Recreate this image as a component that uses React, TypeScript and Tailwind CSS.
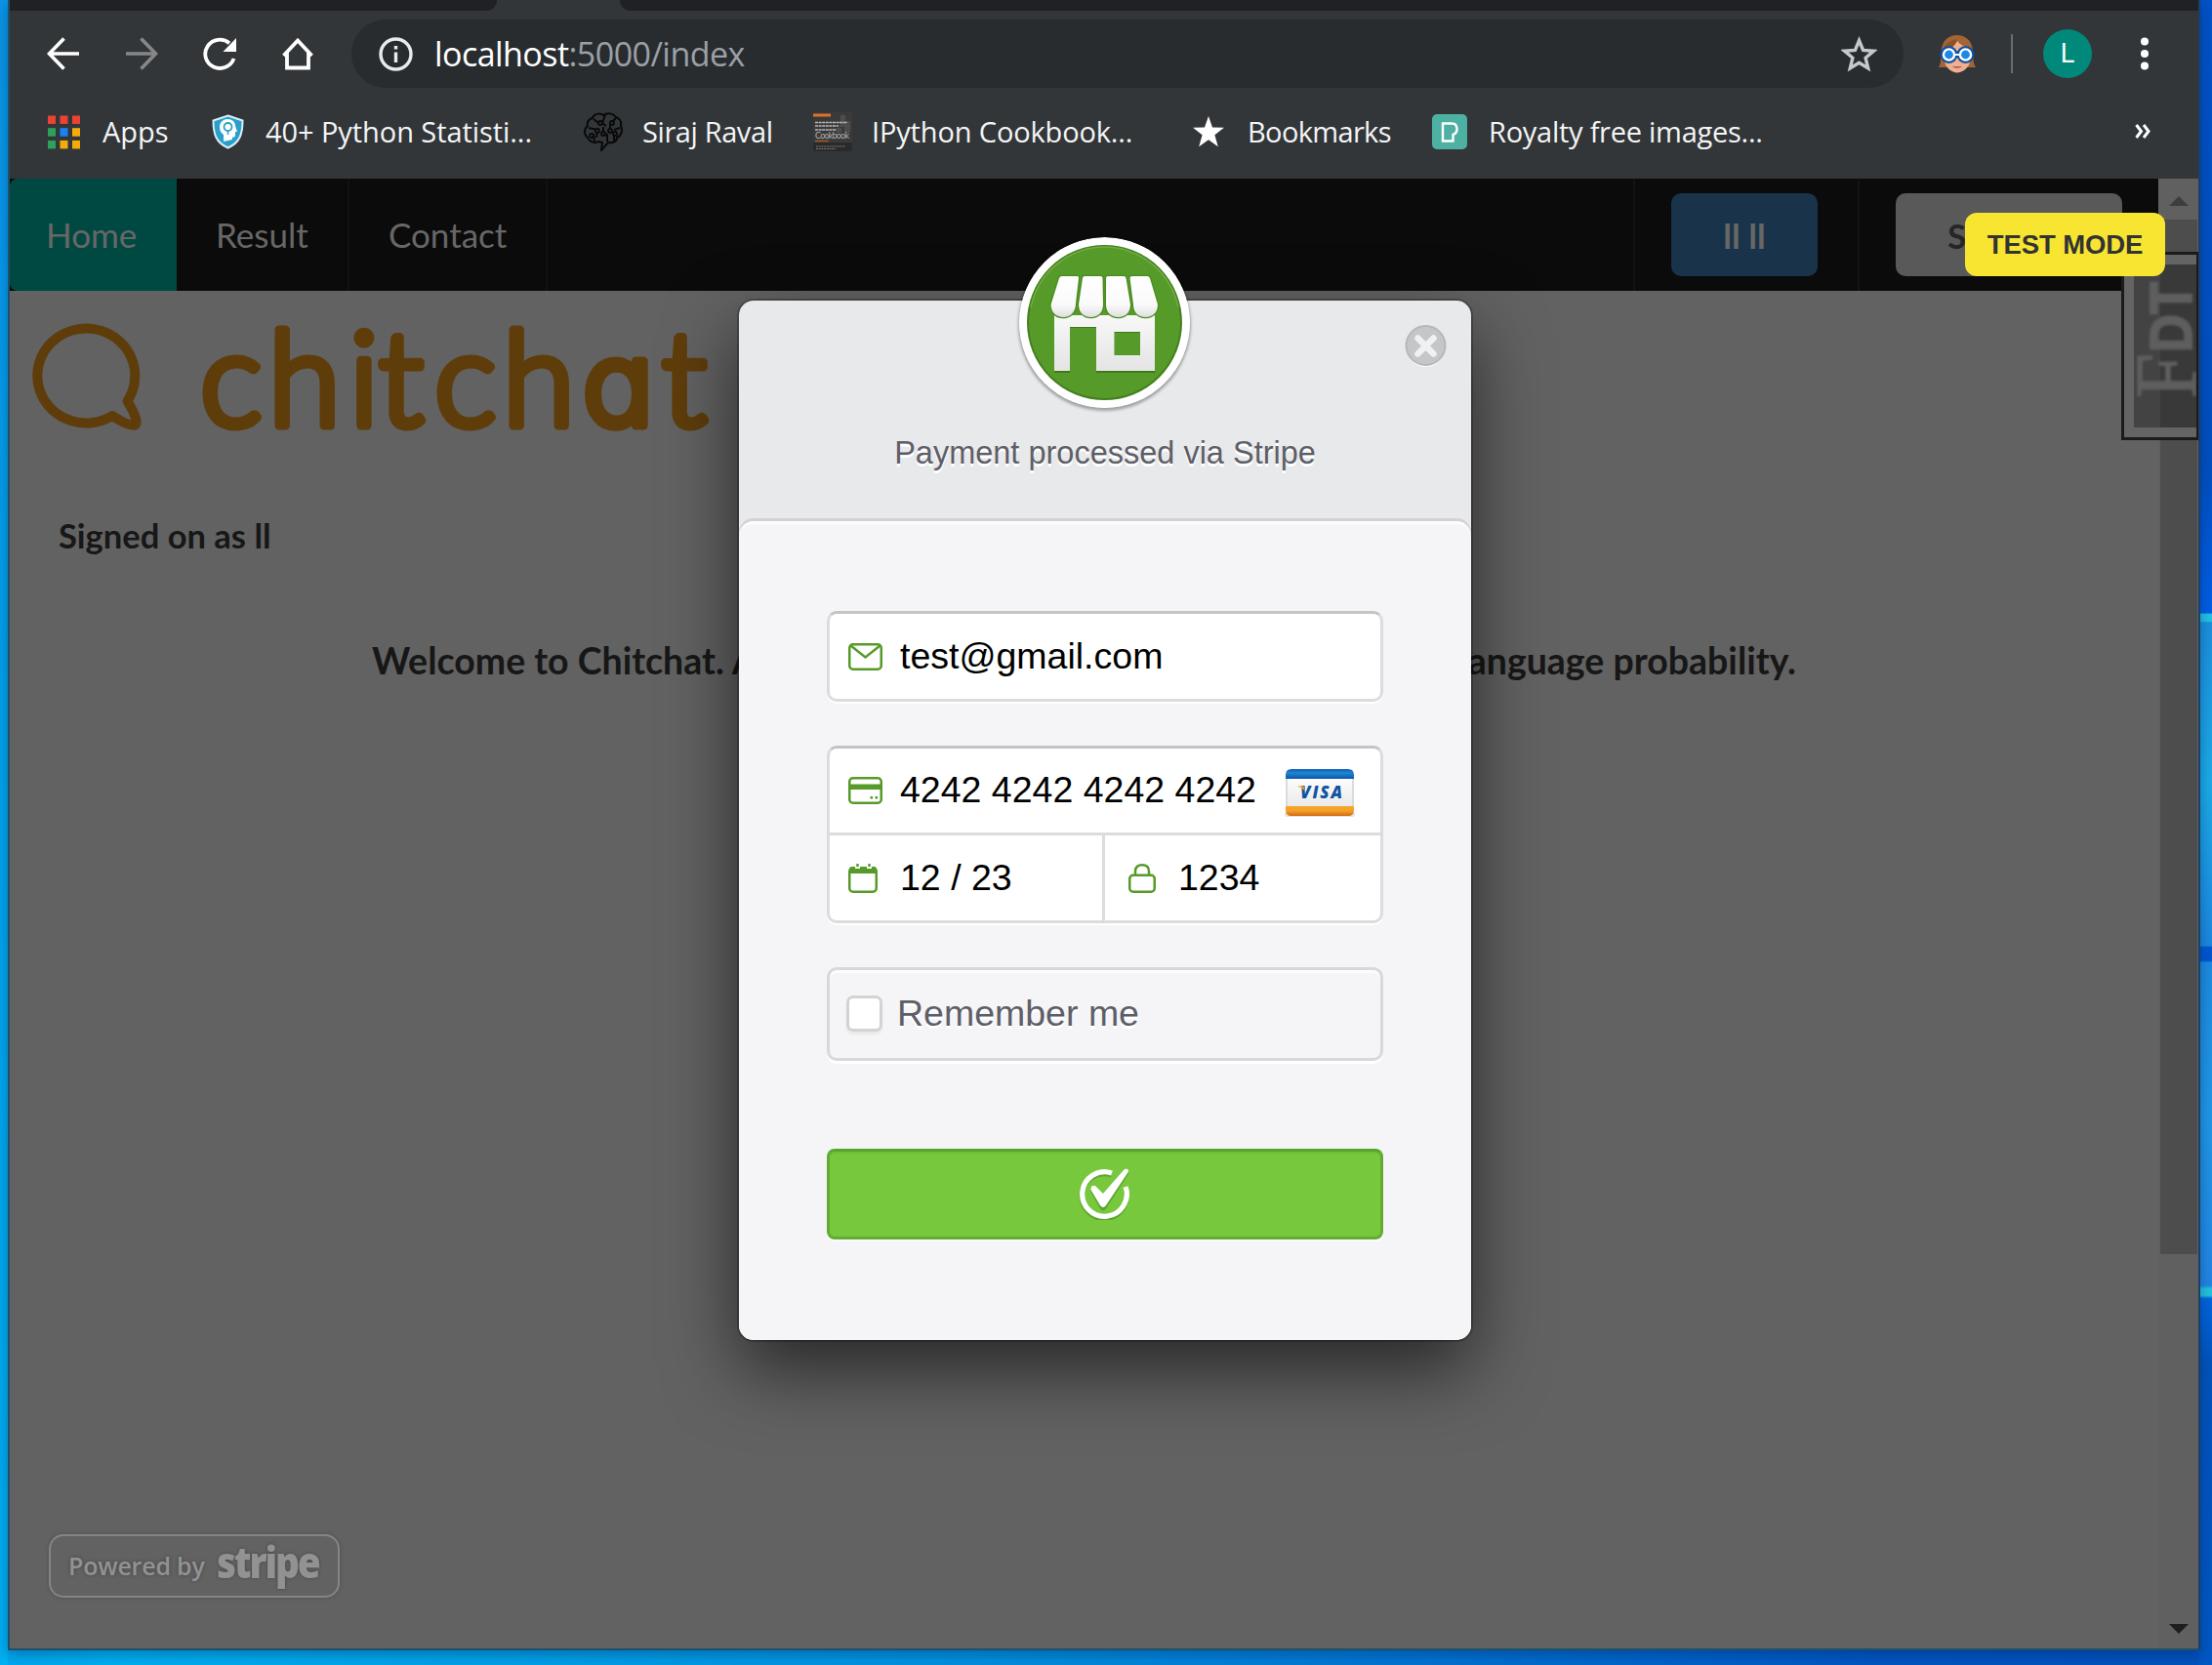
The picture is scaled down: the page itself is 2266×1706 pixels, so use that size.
import React from "react";

const GREEN = "#569b29";

function TopBar() {
  return (
    <div className="flex h-[11px] justify-between bg-[#323639]">
      <div className="h-full w-[499px] rounded-br-[14px] bg-[#202124]" />
      <div className="h-full w-[1617px] rounded-bl-[14px] bg-[#202124]" />
    </div>
  );
}

function NavIcons() {
  return (
    <div className="flex w-[350px] items-center gap-[46px] pl-[38px]">
      <svg className="size-[34px]" viewBox="0 0 34 34" fill="none" stroke="#fff" strokeWidth="3.6">
        <path d="M33 17H4M17.5 1.5L2.5 17l15 15.5" />
      </svg>
      <svg className="size-[34px]" viewBox="0 0 34 34" fill="none" stroke="#868789" strokeWidth="3.6">
        <path d="M1 17h29M16.500 1.500l15 15.500-15 15.500" />
      </svg>
      <svg className="size-[34px]" viewBox="0 0 34 34">
        <path d="M31.500 22A15 14.600 0 1 1 27 6.200" fill="none" stroke="#fff" strokeWidth="3.800" />
        <path d="M34 1v14H20.500z" fill="#fff" />
      </svg>
      <svg className="size-[34px]" viewBox="0 0 34 34" fill="none" stroke="#fff" strokeWidth="3.800">
        <path d="M2.500 19L17 3.500 31.500 19M6 16v15.500h22V16" />
      </svg>
    </div>
  );
}

function Toolbar() {
  return (
    <div className="flex h-[88px] items-center bg-[#323639] font-['Open_Sans',sans-serif]">
      <NavIcons />
      <div className="flex h-[70px] w-[1590px] items-center rounded-full bg-[#282c2f] pr-[27px] pl-[28px]">
        <svg className="size-[35px]" viewBox="0 0 35 35">
          <circle cx="17.500" cy="17.500" r="15.500" fill="none" stroke="#e8eaed" strokeWidth="3.400" />
          <path d="M15.800 9h3.400v3.600h-3.400zM15.800 15.500h3.400v10.500h-3.400z" fill="#e8eaed" />
        </svg>
        <div className="ml-[22px] flex-1 text-[34px] leading-[50px] tracking-[-0.55px] whitespace-nowrap text-[#9aa0a6]">
          <span className="text-white">localhost</span>:5000/index
        </div>
        <svg className="size-[37px]" viewBox="0 0 37 37">
          <path
            d="M18.500 4.500l4.100 10 10.700.8-8.200 7 2.600 10.600-9.200-5.700-9.200 5.700 2.600-10.600-8.200-7 10.700-.8z"
            fill="none"
            stroke="#c6c9cb"
            strokeWidth="3.400"
          />
        </svg>
      </div>
      <svg className="ml-[35px] h-[40px] w-[40px]" viewBox="0 0 40 40">
        <path d="M1 34C5 28 2 18 5 11 8 3 15 1 20 1c7 0 13 4 15 11 2 8 0 16 4 22z" fill="#a56433" />
        <path d="M7 14c6 0 11-3 13-7 3 4 8 6 13 7v13c0 7-8 12.500-13 12.500S7 34 7 27z" fill="#f0b08c" />
        <path d="M5 17C7 9 14 6 20 5c-1 6-7 12-15 12z" fill="#8d5228" />
        <path d="M15 33h10c-2 2.400-8 2.400-10 0z" fill="#b2556b" />
        <circle cx="11.500" cy="21" r="9" fill="#0b50a6" />
        <circle cx="28.500" cy="21" r="9" fill="#0b50a6" />
        <circle cx="11.500" cy="21" r="5.600" fill="#1e88e5" stroke="#fff" strokeWidth="2.400" />
        <circle cx="28.500" cy="21" r="5.600" fill="#1e88e5" stroke="#fff" strokeWidth="2.400" />
        <path d="M17 21h6" stroke="#fff" strokeWidth="2" />
      </svg>
      <div className="ml-[35px] h-[40px] w-[2px] bg-[#6a6d70]" />
      <div className="ml-[31px] flex size-[50px] items-center justify-center rounded-full bg-[#00897b] font-['Roboto',sans-serif] text-[27px] text-white">
        L
      </div>
      <svg className="ml-[49px] h-[34px] w-[10px]" viewBox="0 0 10 34" fill="#fff">
        <circle cx="5" cy="4.500" r="4" />
        <circle cx="5" cy="17" r="4" />
        <circle cx="5" cy="29.500" r="4" />
      </svg>
    </div>
  );
}

function BookmarksBar() {
  const apps = ["#ea4335", "#ea4335", "#ea4335", "#2da15a", "#1a82f5", "#f5ac0a", "#2da15a", "#f5ac0a", "#f5ac0a"];
  return (
    <div className="flex h-[84px] items-start bg-[#323639] pt-[16px] pl-[39px] font-['Open_Sans',sans-serif] text-[29px] leading-[40px] whitespace-nowrap text-[#f4f5f6]">
      <div className="flex w-[168px] items-center">
        <svg className="mr-[23px] h-[35px] w-[33px]" viewBox="0 0 33 35">
          {apps.map((c, i) => (
            <rect key={i} x={(i % 3) * 12.5} y={Math.floor(i / 3) * 12.7 + 0.5} width="8" height="8.500" fill={c} />
          ))}
        </svg>
        <span>Apps</span>
      </div>
      <div className="flex w-[381px] items-center">
        <svg className="mr-[22px] h-[36px] w-[33px]" viewBox="0 0 33 36">
          <path d="M16.500 1.500L31.500 6.500C31.500 20 29 29 16.500 34.500 4 29 1.500 20 1.500 6.500z" fill="#28a0cb" stroke="#d9eef6" strokeWidth="2" />
          <path
            d="M12 28v-7c-3-2-4-5-4-8 0-5 4-8 8-8 5 0 8 3 8 7l2 6h-2v4c0 1-1 2-3 1.500V26z"
            fill="#fff"
          />
          <circle cx="16.500" cy="13" r="4" fill="none" stroke="#28a0cb" strokeWidth="1.800" />
          <path d="M16.500 17v4" stroke="#28a0cb" strokeWidth="1.500" />
        </svg>
        <span className="tracking-[-0.07px]">40+ Python Statisti...</span>
      </div>
      <div className="flex w-[235px] items-center">
        <svg className="mr-[20px] size-[40px]" viewBox="0 0 40 40" fill="none" stroke="#08090a" strokeWidth="2">
          <path d="M20 3c-4-3-10-1-11 3-4 1-6 4-5 8-4 3-4 9 0 12 2 5 8 6 11 4l4 1-1 8 7-8c5 1 9-1 9-5 5-2 6-8 4-12 1-5-2-8-5-9-3-4-9-5-13-2z" />
          <path d="M10 7l5 4M22 3l-3 8 4 3M33 6l-4 4M5 16l9 2-1 8M37 16l-6 2M20 15v6l4 2v7M11 30l-1-8M31 30v-7M27 12v6" />
          <g fill="#323639" strokeWidth="1.800">
            <circle cx="17" cy="11" r="2" />
            <circle cx="29" cy="11" r="2" />
            <circle cx="14" cy="19" r="2" />
            <circle cx="20" cy="22" r="2" />
            <circle cx="27" cy="19" r="2" />
            <circle cx="32" cy="22" r="2" />
            <circle cx="8" cy="24" r="2" />
          </g>
        </svg>
        <span className="tracking-[-0.4px]">Siraj Raval</span>
      </div>
      <div className="flex w-[389px] items-center">
        <svg className="mr-[20px] size-[40px]" viewBox="0 0 40 40">
          <rect width="40" height="40" fill="#3a3a3a" />
          <path d="M28 3h5v6h5v12h-6v-6h-5zM24 16h5v5h-5z" fill="#4d4d4d" />
          <path d="M0 31h40v9H0z" fill="#2a2a2a" />
          <rect y="1.500" width="18" height="3" fill="#e0712a" />
          <path d="M2 10.500h33M2 14h24M2 18h22" stroke="#b9b9b9" strokeWidth="1.600" strokeDasharray="3 .6" />
          <text x="2" y="27" fontSize="9" fill="#b0b0b0" fontFamily="Lato, sans-serif" textLength="35">
            Cookbook
          </text>
          <path d="M2 29.500h14" stroke="#a8561f" strokeWidth="1.500" />
          <path d="M3 35h30M3 37.500h20" stroke="#777" strokeWidth="1.200" strokeDasharray="2 .7" />
        </svg>
        <span className="tracking-[-0.15px]">IPython Cookbook...</span>
      </div>
      <div className="flex w-[245px] items-center">
        <svg className="mr-[24px] size-[32px]" viewBox="0 0 32 32">
          <path d="M16 0l4 11.500 12 .3-9.600 7.400 3.400 12L16 24.200l-9.800 7 3.400-12L0 11.800l12-.3z" fill="#fff" />
        </svg>
        <span className="tracking-[-0.65px]">Bookmarks</span>
      </div>
      <div className="flex w-[720px] items-center">
        <svg className="mr-[22px] size-[36px]" viewBox="0 0 36 36">
          <rect width="36" height="36" rx="5" fill="#4eb0a2" />
          <path
            d="M11 9.500h9.500c6 0 7 9.500 1 11.500v6.500H11z"
            fill="none"
            stroke="#fff"
            strokeWidth="2.400"
          />
          <path d="M16.500 13.500v8" stroke="#4eb0a2" strokeWidth="1" />
        </svg>
        <span className="tracking-[-0.26px]">Royalty free images...</span>
      </div>
      <svg className="mt-[12px] h-[15px] w-[17px]" viewBox="0 0 17 15" fill="none" stroke="#fff" strokeWidth="3">
        <path d="M1.500 1l5 6.500-5 6.500M9 1l5 6.500L9 14" />
      </svg>
    </div>
  );
}

function SiteNav() {
  return (
    <div className="flex h-[115px] w-[2201px] items-stretch bg-[#0b0b0b] font-['Lato',sans-serif] text-[35px] leading-[115px] text-[#676767]">
      <div className="w-[171px] rounded-l-[8px] bg-[#004943] pl-[37px]">Home</div>
      <div className="w-[177px] border-r-2 border-[#111] pl-[40px]">Result</div>
      <div className="w-[203px] border-r-2 border-[#111] pl-[40px]">Contact</div>
      <div className="w-[1114px] border-r-2 border-[#131313]" />
      <div className="flex w-[230px] items-center border-r-2 border-[#131313] pl-[37px]">
        <div className="h-[85px] w-[150px] rounded-[10px] bg-[#19334b] text-center font-bold leading-[87px]">ll ll</div>
      </div>
      <div className="flex items-center pl-[37px]">
        <div className="h-[85px] w-[232px] rounded-[10px] bg-[#595959] pl-[53px] font-bold leading-[87px] text-[#262626]">
          Sign Out
        </div>
      </div>
    </div>
  );
}

function ChitchatLogo() {
  return (
    <svg className="block h-[140px] w-[747px]" viewBox="10 298 747 140" overflow="visible" fill="#5f3d0b" stroke="#5f3d0b">
      <path
        d="M130.500 411A50 48.500 0 1 0 115 426Q134 438 138.500 435.500Q143 432 130.500 411z"
        fill="none"
        strokeWidth="10"
        strokeLinejoin="round"
      />
      <text
        x="205 275 358 388 445 515 597 678"
        y="436"
        fontSize="134"
        fontWeight="300"
        fontFamily="Lato, sans-serif"
        strokeWidth="9"
        strokeLinejoin="round"
      >
        chitch
        <tspan fontFamily="Inter, sans-serif" fontSize="120" className="[font-feature-settings:'cv11']">
          a
        </tspan>
        t
      </text>
    </svg>
  );
}

function StripeBadge() {
  return (
    <div className="flex h-[65px] w-[298px] items-center rounded-[15px] border-2 border-[#858585] pl-[18px] text-[#929292] shadow-[0_0_4px_rgba(0,0,0,0.2)] [text-shadow:0_0_4px_rgba(0,0,0,0.3)]">
      <span className="w-[152px] font-['Open_Sans',sans-serif] text-[25px] font-semibold tracking-[-0.200px] whitespace-nowrap">
        Powered by
      </span>
      <span className="-mt-[9px] origin-left scale-x-[0.86] font-['Open_Sans',sans-serif] text-[45px] leading-[50px] font-extrabold tracking-[-2.500px]">
        stripe
      </span>
    </div>
  );
}

function Scrollbar() {
  return (
    <div className="relative flex w-[41px] flex-col items-end bg-[#606060]">
      <div className="flex h-[42px] w-full items-center justify-center pt-1">
        <svg className="h-[10px] w-[20px]" viewBox="0 0 20 10">
          <path d="M10 0L20 10H0z" fill="#3e3e3e" />
        </svg>
      </div>
      <div className="mr-[1px] h-[1060px] w-[38px] bg-[#4d4d4d]" />
      <div className="flex w-full flex-1 items-end justify-center pb-[15px]">
        <svg className="h-[10px] w-[20px]" viewBox="0 0 20 10">
          <path d="M0 0h20L10 10z" fill="#1e1e1e" />
        </svg>
      </div>
    </div>
  );
}

function ToolbarHandle() {
  return (
    <div className="absolute top-[75px] right-0 h-[193px] w-[79px] border-3 border-r-2 border-[#1b1b1b] bg-[#646464] pt-[10px] pl-[10px]">
      <svg className="block h-[167px] w-[64px]" viewBox="0 0 64 167">
        <rect width="64" height="167" fill="#434343" />
        <rect x="27" width="37" height="167" fill="#393939" />
        <g fill="#5e5e5e" stroke="#5e5e5e" className="blur-[1px]">
          <text transform="translate(64 137) rotate(-90)" fontFamily="Liberation Serif, serif" fontSize="90" textLength="46" lengthAdjust="spacingAndGlyphs" strokeWidth="1.500">
            F
          </text>
          <text transform="translate(59 90) rotate(-90)" fontFamily="Liberation Sans, sans-serif" fontWeight="700" fontSize="61" textLength="72" lengthAdjust="spacingAndGlyphs" strokeWidth="2">
            DT
          </text>
        </g>
      </svg>
    </div>
  );
}

function StoreLogo() {
  return (
    <svg className="absolute -top-[65px] left-[287px] size-[175px] rounded-full shadow-[0_2px_3px_1px_rgba(0,0,0,0.3)]" viewBox="0 0 175 175">
      <defs>
        <linearGradient id="awning" x1="0" y1="0" x2="0" y2="1">
          <stop offset="0" stopColor="#fff" />
          <stop offset="0.7" stopColor="#fafafa" />
          <stop offset="1" stopColor="#dedede" />
        </linearGradient>
        <linearGradient id="wall" x1="0" y1="0" x2="0" y2="1">
          <stop offset="0" stopColor="#f8f8f8" />
          <stop offset="1" stopColor="#e4e4e4" />
        </linearGradient>
      </defs>
      <circle cx="87.500" cy="87.500" r="87.500" fill="#fff" />
      <circle cx="87.500" cy="87.500" r="78.500" fill={GREEN} stroke="#457f20" strokeWidth="2" />
      <path d="M12 72A77 77 0 0 1 163 72" fill="none" stroke="#6fae45" strokeWidth="1.500" />
      <path d="M36 85h103v53H79V92H52v46H36zM97.500 97v24H124V97z" transform="translate(0 1)" fill="#3d7a17" fillRule="evenodd" />
      <path d="M36 80h103v57H79V92H52v45H36zM97.500 97v24H124V97z" fill="url(#wall)" fillRule="evenodd" />
      <g stroke="#4a8c20" strokeWidth="2.500" paintOrder="stroke" fill="url(#awning)">
        <path d="M43.500 40h16q2 0 1.500 2L58 68c0 8-5 14-12.500 14S32.600 77 32.600 69L41 42q1-2 2.500-2z" />
        <path d="M67 40h16.500q2 0 2 2L86 69c0 8-5 13-12.500 13S61 77 61 69l4-27q.5-2 2-2z" />
        <path d="M91 40h16.500q1.500 0 2 2l4.500 27c0 8-5 13-12.500 13S89 77 89 69V42q0-2 2-2z" />
        <path d="M115.500 40h16q1.500 0 2.500 2l8 27c0 8-5 13-12.500 13S117 77 117 69l-3.500-27q0-2 2-2z" />
      </g>
    </svg>
  );
}

function MailIcon() {
  return (
    <svg className="h-[28px] w-[35px]" viewBox="0 0 35 28" fill="none" stroke={GREEN} strokeWidth="2.500">
      <rect x="1.250" y="1.250" width="32.500" height="25.500" rx="3.500" />
      <path d="M2.500 2.500l15 12 15-12" />
    </svg>
  );
}

function CardIcon() {
  return (
    <svg className="h-[28px] w-[35px]" viewBox="0 0 35 28">
      <rect x="1.250" y="1.250" width="32.500" height="25.500" rx="3.500" fill="none" stroke={GREEN} strokeWidth="2.500" />
      <path d="M1 7.500h33V13H1zM22.500 20h2.600v2.600h-2.600zM27.500 20h2.600v2.600h-2.600z" fill={GREEN} />
    </svg>
  );
}

function CalendarIcon() {
  return (
    <svg className="h-[30px] w-[30px]" viewBox="0 0 30 30">
      <rect x="1.250" y="4.250" width="27.500" height="24.500" rx="3.500" fill="none" stroke={GREEN} strokeWidth="2.500" />
      <path d="M1 10V6q0-3 3-3h22q3 0 3 3v4z" fill={GREEN} />
      <path d="M7 0h5v5H7zM19 0h5v5h-5z" fill="#fff" />
      <path d="M8.300 0h2.400v3H8.300zM20.300 0h2.400v3h-2.400z" fill={GREEN} />
    </svg>
  );
}

function LockIcon() {
  return (
    <svg className="h-[30px] w-[28px]" viewBox="0 0 28 30" fill="none" stroke={GREEN} strokeWidth="2.500">
      <rect x="1.250" y="11.750" width="25.500" height="17" rx="3.500" />
      <path d="M7 11V8q0-6.700 7-6.700T21 8v3" />
    </svg>
  );
}

function VisaIcon() {
  return (
    <svg className="mt-[4px] h-[48px] w-[70px]" viewBox="0 0 70 48" overflow="visible">
      <defs>
        <linearGradient id="visaBlue" x1="0" y1="0" x2="0" y2="1">
          <stop offset="0" stopColor="#0d5db0" />
          <stop offset="0.4" stopColor="#1e86d4" />
          <stop offset="1" stopColor="#0c56a8" />
        </linearGradient>
        <linearGradient id="visaGold" x1="0" y1="0" x2="0" y2="1">
          <stop offset="0" stopColor="#f7a823" />
          <stop offset="0.5" stopColor="#f0a02c" />
          <stop offset="1" stopColor="#d4660c" />
        </linearGradient>
        <linearGradient id="visaBody" x1="0" y1="0" x2="0" y2="1">
          <stop offset="0" stopColor="#fff" />
          <stop offset="1" stopColor="#e9e7e6" />
        </linearGradient>
      </defs>
      <rect x="-1" y="44" width="72" height="5" rx="2.500" fill="#e6e2df" />
      <rect x="1" y="6" width="68" height="36" fill="url(#visaBody)" stroke="#ccd3dc" strokeWidth="1.500" />
      <path d="M0 10V6q0-6 6-6h58q6 0 6 6v4z" fill="url(#visaBlue)" />
      <path d="M0 38v4q0 6 6 6h58q6 0 6-6v-4z" fill="url(#visaGold)" />
      <text x="15" y="30" fontFamily="Open Sans, sans-serif" fontWeight="800" fontStyle="italic" fontSize="17" textLength="43" fill="#0f54a3">
        VISA
      </text>
      <path d="M12.500 17.500h6l1 5q-2-3.500-7-4.500z" fill="#f2a02b" />
    </svg>
  );
}

function PaymentForm() {
  return (
    <div className="h-[839px] rounded-[15px] border-t-3 border-[#fdfdfe] bg-[#f5f5f7] px-[90px] pt-[89px] text-[37.5px] leading-[44px] text-black">
      <div className="flex h-[93px] items-center rounded-[10px] border-3 border-[#dcdcdd] border-t-[#c4c4c5] bg-white pl-[19px] shadow-[0_2px_0_#fff]">
        <MailIcon />
        <span className="-mt-[2px] ml-[18px]">test@gmail.com</span>
      </div>
      <div className="mt-[45px] h-[182px] rounded-[10px] border-3 border-[#dcdcdd] border-t-[#c4c4c5] bg-white shadow-[0_2px_0_#fff]">
        <div className="flex h-[89px] items-center border-b-3 border-[#dcdcdd] pl-[19px]">
          <CardIcon />
          <span className="-mt-[2px] ml-[18px] w-[395px]">4242 4242 4242 4242</span>
          <VisaIcon />
        </div>
        <div className="flex h-[87px]">
          <div className="flex w-[282px] items-center border-r-3 border-[#dcdcdd] pl-[19px]">
            <CalendarIcon />
            <span className="-mt-[2px] ml-[23px]">12 / 23</span>
          </div>
          <div className="flex items-center pl-[24px]">
            <LockIcon />
            <span className="-mt-[2px] ml-[23px]">1234</span>
          </div>
        </div>
      </div>
      <div className="mt-[45px] flex h-[96px] items-center rounded-[10px] border-3 border-[#d8d8da] pl-[17px] text-[#5e5e68] shadow-[0_3px_0_#fff,inset_0_3px_0_#fcfcfd] [text-shadow:0_2.500px_0_#fff]">
        <div className="-mt-[2px] size-[37px] rounded-[7px] border-3 border-[#d3d3d4] bg-white shadow-[0_3px_3px_rgba(0,0,0,0.05)]" />
        <span className="-mt-[2px] ml-[15px]">Remember me</span>
      </div>
      <div className="mt-[90px] flex h-[93px] items-center justify-center rounded-[8px] border-3 border-[#62ac34] border-t-[#58a42f] bg-[#78c83d] shadow-[0_2px_0_#fff,inset_0_2px_0_#6fc038]">
        <svg className="-mt-[2px] -ml-[2px] size-[54px]" viewBox="0 0 54 54">
          <g fill="none" stroke="#5da62d" transform="translate(0 2.500)">
            <path d="M34.500 5.500A23 23 0 1 0 49 20" strokeWidth="5" />
            <path d="M14 20q3-3 6 1l6 6L47 3q3-3 5 0 0 2-1 3L29 40q-3 4-6 0L14 24q-1-2 0-4z" fill="#5da62d" stroke="none" />
          </g>
          <path d="M35 6A22.800 22.800 0 1 0 49 20" fill="none" stroke="#fff" strokeWidth="5.200" />
          <path d="M14 20q3-3 6 1l6 6L47 3q3-3 5 0 0 2-1 3L29 39q-3 4-6 0L14 24q-1-2 0-4z" fill="#fff" />
        </svg>
      </div>
    </div>
  );
}

function CheckoutModal() {
  return (
    <div className="absolute top-[125px] left-[747px] h-[1065px] w-[750px] rounded-[15px] bg-[#e8e9eb] font-['Liberation_Sans',Arial,sans-serif] shadow-[0_0_0_2px_rgba(0,0,0,0.22),0_30px_75px_rgba(0,0,0,0.6)]">
      <StoreLogo />
      <svg className="absolute top-[25px] left-[682px] size-[43px]" viewBox="0 0 43 43">
        <circle cx="21.500" cy="22.500" r="20.500" fill="#fbfbfb" />
        <circle cx="21.500" cy="21" r="20" fill="#c5c6c8" stroke="#b6b7b9" strokeWidth="2" />
        <path d="M13.500 13.500l16 16M29.500 13.500l-16 16" stroke="#f0f1f2" strokeWidth="6.500" strokeLinecap="round" />
      </svg>
      <div className="flex h-[226px] justify-center pt-[137px] text-[32.5px] leading-[38px] text-[#5e5e68] [text-shadow:0_2.500px_0_#fff]">
        Payment processed via Stripe
      </div>
      <div className="rounded-[15px] shadow-[0_-3px_0_#d2d2d4]">
        <PaymentForm />
      </div>
    </div>
  );
}

export default function App() {
  return (
    <div className="h-[1706px] w-[2266px] overflow-hidden bg-[linear-gradient(90deg,#00a8ef_0%,#00b0f2_5%,#0090e0_45%,#0056c4_85%,#0252bd_100%)]">
      <div className="flex h-full bg-[linear-gradient(180deg,#0053c8_0%,#0050c0_28%,#0060e8_36.800%,#22c4e4_36.900%,#22c4e4_37.300%,#1c90de_37.400%,#1cace8_47%,#1c88e0_56.800%,#0058d0_56.900%,#0058d0_57.700%,#1c8ce0_57.800%,#2098e6_67%,#2286e4_77.200%,#22c4e0_77.400%,#22c4e0_77.800%,#0066e0_78%,#0054bc_82%,#0058c4_100%)] [background-position:right_top] bg-[length:13px_100%] bg-no-repeat pr-[12px]">
        <div className="h-full w-[8px] bg-[linear-gradient(180deg,#0a96ea,#00a6ee_50%,#00b0f4)]" />
        <div className="flex h-[1691px] w-[2246px] flex-col border-x-2 border-b-2 border-[#1f5068] border-r-[#1c3f66] shadow-[0_4px_14px_rgba(0,20,60,0.35)]">
          <TopBar />
          <Toolbar />
          <BookmarksBar />
          <div className="relative flex h-[1506px] overflow-hidden bg-[#626262]">
            <div className="w-[2201px]">
              <SiteNav />
              <ChitchatLogo />
              <div className="flex h-[1251px] flex-col items-start font-['Lato',sans-serif] font-bold text-[#171717]">
                <div className="pt-[91px] pl-[50px] text-[34.5px] leading-[40px]">Signed on as ll</div>
                <div className="mt-[88px] ml-[371px] flex w-[1459px] justify-between text-[37.5px] leading-[40px]">
                  <span>Welcome to Chitchat. A</span>
                  <span>language probability.</span>
                </div>
                <div className="mt-[875px] ml-[40px]">
                  <StripeBadge />
                </div>
              </div>
            </div>
            <Scrollbar />
            <ToolbarHandle />
            <CheckoutModal />
            <div className="absolute top-[35px] left-[2003px] flex h-[65px] w-[205px] items-center justify-center rounded-[12px] bg-[#f8e532] font-['Liberation_Sans',Arial,sans-serif] text-[27.5px] font-bold tracking-[-0.1px] whitespace-nowrap text-[#333]">
              TEST MODE
            </div>
          </div>
        </div>
      </div>
    </div>
  );
}
